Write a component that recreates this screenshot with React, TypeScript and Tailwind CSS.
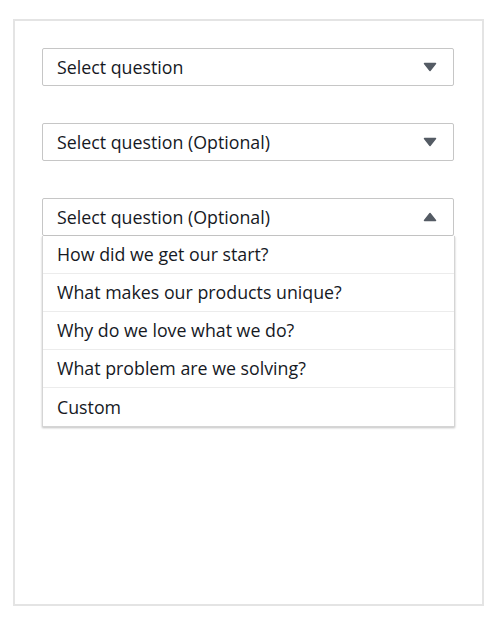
import React from "react";

const Down = () => (
  <svg width="14" height="10" viewBox="0 0 14 10" className="shrink-0">
    <path d="M1.5 1.5 L12.5 1.5 L7 8.5 Z" fill="#545b64" stroke="#545b64" strokeWidth="1.5" strokeLinejoin="round" />
  </svg>
);
const Up = () => (
  <svg width="14" height="10" viewBox="0 0 14 10" className="shrink-0">
    <path d="M1.5 8.5 L12.5 8.5 L7 1.5 Z" fill="#545b64" stroke="#545b64" strokeWidth="1.5" strokeLinejoin="round" />
  </svg>
);

const options = [
  "How did we get our start?",
  "What makes our products unique?",
  "Why do we love what we do?",
  "What problem are we solving?",
  "Custom",
];

export default function App() {
  return (
    <div className="w-[500px] h-[625px] bg-white pt-[19px] pl-[13px]" style={{ fontFamily: '"Open Sans", "Noto Sans", Arial, sans-serif' }}>
      <div className="w-[471px] h-[587px] border-2 border-[#e4e4e4] pt-[27px] pl-[27px] flex flex-col gap-[37px]">
        <div className="w-[412px] h-[38px] border border-[#c6c6c6] rounded-[2px] flex items-center justify-between pl-[14px] pr-[16px] text-[17.8px] text-[#16191f]">
          <span>Select question</span>
          <Down />
        </div>
        <div className="w-[412px] h-[38px] border border-[#c6c6c6] rounded-[2px] flex items-center justify-between pl-[14px] pr-[16px] text-[17.8px] text-[#16191f]">
          <span>Select question (Optional)</span>
          <Down />
        </div>
        <div className="w-[413px] flex flex-col">
          <div className="w-[412px] h-[38px] border border-[#c6c6c6] rounded-[2px] flex items-center justify-between pl-[14px] pr-[16px] text-[17.8px] text-[#16191f]">
            <span>Select question (Optional)</span>
            <Up />
          </div>
          <div className="w-[413px] border-x border-b border-[#d5d5d5] shadow-[0_1px_2px_rgba(0,0,0,0.25)] flex flex-col">
            {options.map((o, i) => (
              <div
                key={o}
                className={`h-[38px] flex items-center pl-[14px] text-[17.8px] text-[#16191f] ${i < options.length - 1 ? "border-b border-[#ececec]" : ""}`}
              >
                {o}
              </div>
            ))}
          </div>
        </div>
      </div>
    </div>
  );
}
